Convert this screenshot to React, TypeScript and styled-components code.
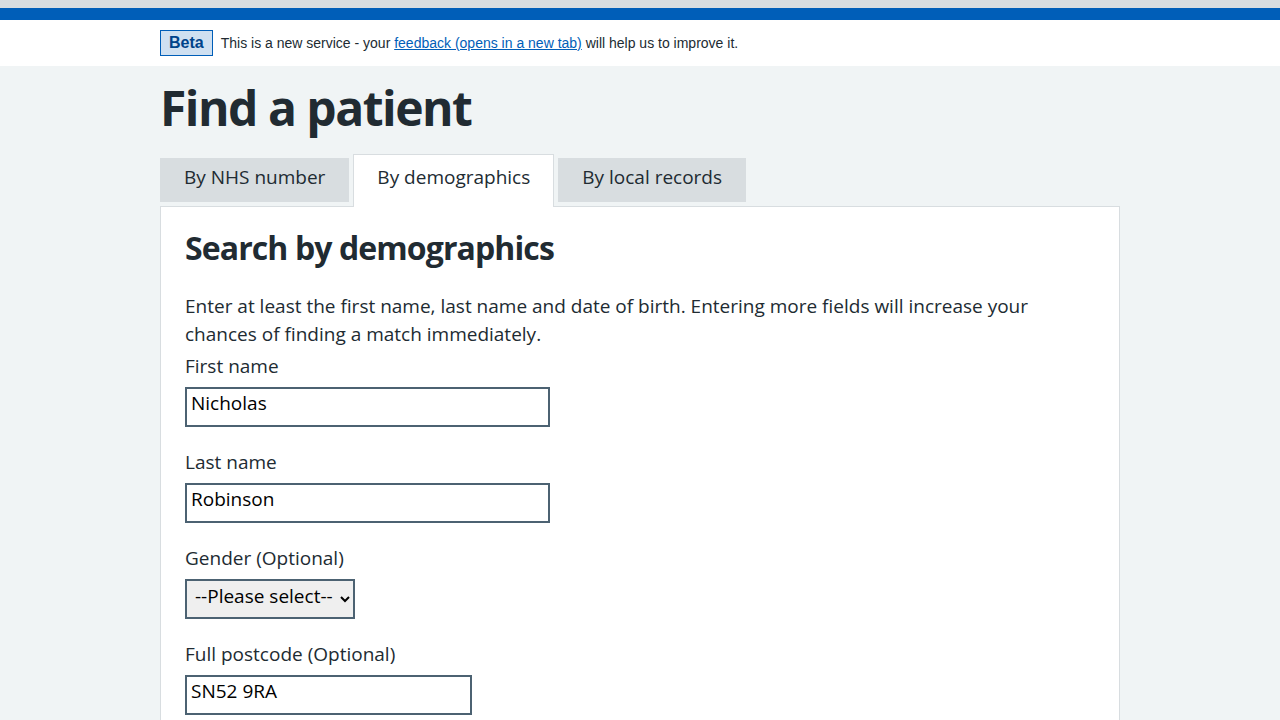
import React from "react";
import styled, { createGlobalStyle } from "styled-components";

const FONT = `"Open Sans", "Noto Sans", Arial, sans-serif`;

const GlobalStyle = createGlobalStyle`
  html, body { margin: 0; padding: 0; }
  body {
    background: #f0f4f5;
    font-family: ${FONT};
    color: #212b32;
  }
  * { box-sizing: border-box; }
`;

const TopStrip = styled.div`
  height: 8px;
  background: #d8dde0;
`;

const BlueBar = styled.div`
  height: 12px;
  background: #005eb8;
`;

const Banner = styled.div`
  background: #ffffff;
  height: 46px;
`;

const Container = styled.div`
  width: 960px;
  margin: 0 auto;
`;

const BannerInner = styled(Container)`
  height: 100%;
  display: flex;
  align-items: center;
  gap: 8px;
  font-family: "Liberation Sans", Arial, sans-serif;
`;

const BetaTag = styled.strong`
  display: inline-block;
  background: #cfe0f1;
  border: 1px solid #005eb8;
  color: #00438a;
  font-size: 16px;
  font-weight: 700;
  line-height: 24px;
  padding: 0 8px;
`;

const BannerText = styled.p`
  margin: 0;
  font-size: 14px;
  color: #212b32;
  a { color: #005eb8; text-decoration: underline; }
`;

const Main = styled(Container)`
  padding-top: 14px;
`;

const Title = styled.h1`
  margin: 0 0 18px;
  font-size: 48px;
  line-height: 56px;
  font-weight: 700;
  letter-spacing: -1.5px;
  color: #212b32;
`;

const TabList = styled.ul`
  list-style: none;
  margin: 0;
  padding: 0;
  display: flex;
  align-items: flex-start;
  gap: 4px;
`;

const Tab = styled.li<{ $active?: boolean }>`
  position: relative;
  font-size: 19px;
  line-height: 28px;
  color: #212b32;
  white-space: nowrap;
  ${(p) =>
    p.$active
      ? `
    z-index: 1;
    background: #ffffff;
    border: 1px solid #d8dde0;
    border-bottom: 0;
    padding: 8px 23px 16px;
    margin-bottom: -1px;
  `
      : `
    background: #d8dde0;
    padding: 5px 24px 11px;
    margin: 4px 0;
  `}
`;

const Panel = styled.section`
  background: #ffffff;
  border: 1px solid #d8dde0;
  padding: 21px 24px 32px;
`;

const PanelTitle = styled.h2`
  margin: 0 0 24px;
  font-size: 32px;
  line-height: 40px;
  font-weight: 700;
  letter-spacing: -0.9px;
`;

const Lead = styled.p`
  margin: 0 0 4px;
  font-size: 19px;
  line-height: 28px;
`;

const FormGroup = styled.div`
  margin-bottom: 21px;
`;

const Label = styled.label`
  display: block;
  font-size: 19px;
  line-height: 28px;
  margin-bottom: 7px;
  color: #212b32;
`;

const TextInput = styled.input<{ $width: number }>`
  display: block;
  width: ${(p) => p.$width}px;
  height: 40px;
  border: 2px solid #4c6272;
  border-radius: 0;
  padding: 0 4px 8px;
  font-family: ${FONT};
  font-size: 19px;
  color: #000000;
  background: #ffffff;
  outline: none;
`;

const Select = styled.select`
  display: block;
  height: 40px;
  border: 2px solid #4c6272;
  border-radius: 0;
  padding: 0 4px 6px;
  font-family: ${FONT};
  font-size: 19px;
  color: #000000;
  background-color: #efefef;
`;

const DateRow = styled.div`
  display: flex;
  gap: 24px;
`;

const DateItem = styled.div`
  display: flex;
  flex-direction: column;
`;

const SmallLabel = styled.label`
  font-size: 19px;
  line-height: 28px;
  margin-bottom: 4px;
`;

const Button = styled.button`
  font-family: ${FONT};
  font-size: 19px;
  font-weight: 600;
  color: #ffffff;
  background: #007f3b;
  border: 0;
  border-radius: 4px;
  box-shadow: 0 4px 0 #00401e;
  padding: 12px 16px;
`;

export default function App() {
  return (
    <>
      <GlobalStyle />
      <TopStrip />
      <BlueBar />
      <Banner>
        <BannerInner>
          <BetaTag>Beta</BetaTag>
          <BannerText>
            This is a new service - your{" "}
            <a href="#feedback">feedback (opens in a new tab)</a> will help us to
            improve it.
          </BannerText>
        </BannerInner>
      </Banner>
      <Main>
        <Title>Find a patient</Title>
        <TabList>
          <Tab>By NHS number</Tab>
          <Tab $active>By demographics</Tab>
          <Tab>By local records</Tab>
        </TabList>
        <Panel>
          <PanelTitle>Search by demographics</PanelTitle>
          <Lead>
            Enter at least the first name, last name and date of birth. Entering
            more fields will increase your chances of finding a match immediately.
          </Lead>
          <FormGroup>
            <Label htmlFor="first">First name</Label>
            <TextInput id="first" $width={365} defaultValue="Nicholas" />
          </FormGroup>
          <FormGroup>
            <Label htmlFor="last">Last name</Label>
            <TextInput id="last" $width={365} defaultValue="Robinson" />
          </FormGroup>
          <FormGroup>
            <Label htmlFor="gender">Gender (Optional)</Label>
            <Select id="gender" defaultValue="">
              <option value="">--Please select--</option>
              <option value="f">Female</option>
              <option value="m">Male</option>
            </Select>
          </FormGroup>
          <FormGroup>
            <Label htmlFor="postcode">Full postcode (Optional)</Label>
            <TextInput id="postcode" $width={287} defaultValue="SN52 9RA" />
          </FormGroup>
          <FormGroup>
            <Label>Date of birth</Label>
            <DateRow>
              <DateItem>
                <SmallLabel>Day</SmallLabel>
                <TextInput $width={56} />
              </DateItem>
              <DateItem>
                <SmallLabel>Month</SmallLabel>
                <TextInput $width={56} />
              </DateItem>
              <DateItem>
                <SmallLabel>Year</SmallLabel>
                <TextInput $width={88} />
              </DateItem>
            </DateRow>
          </FormGroup>
          <Button type="button">Search</Button>
        </Panel>
      </Main>
    </>
  );
}
